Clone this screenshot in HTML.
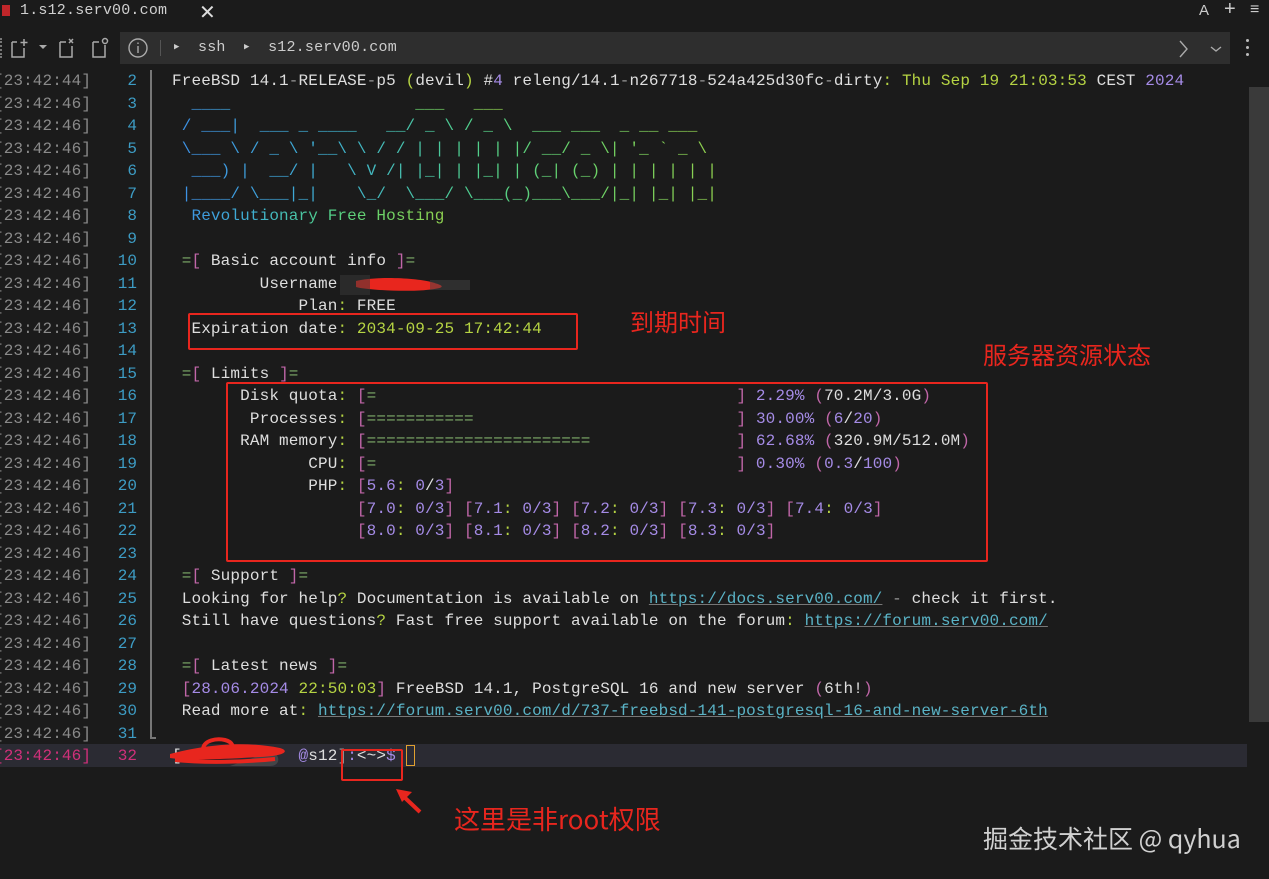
<!DOCTYPE html>
<html><head><meta charset="utf-8"><style>
body{margin:0;width:1269px;height:879px;background:#1b1b1b;overflow:hidden;position:relative;font-family:"Liberation Mono",monospace;}
.r{position:absolute;left:0;height:22.5px;line-height:22.5px;font-size:16px;white-space:pre;color:#dedede;width:1247px}
.ts{position:absolute;left:-6px;color:#8a8a8a;letter-spacing:0.1px}
.ln{position:absolute;right:1110px;color:#3d9cc4;text-align:right}
.tx{position:absolute;left:172px;letter-spacing:0.13px}
.p{color:#a58be6}.y{color:#b6d443}.b{color:#c066a8}.e{color:#7fae6a}.l{color:#5ab3c6;text-decoration:underline;text-decoration-color:#777}
.g{color:#9a9a9a}
.art{background:linear-gradient(90deg,#3d8fe6 0%,#3fb0d0 30%,#4fcf8f 55%,#69d36a 75%,#8fd04f 100%);-webkit-background-clip:text;background-clip:text;color:transparent}
.box{position:absolute;border:2.5px solid #e8261e;border-radius:2px}
.ann{position:absolute;color:#e8261e;font-family:"Noto Sans CJK SC",sans-serif;white-space:nowrap}
</style></head><body>
<div style="position:absolute;left:2px;top:5px;width:8px;height:11px;background:#c0262a"></div>
<div style="position:absolute;left:20px;top:2px;font-size:15px;color:#cfcfcf;letter-spacing:0.2px">1.s12.serv00.com</div>
<div style="position:absolute;left:199px;top:0px;font-family:'Liberation Sans',sans-serif;font-size:20px;color:#ddd">✕</div>
<div style="position:absolute;left:1199px;top:2px;font-family:'Liberation Sans',sans-serif;font-size:15px;color:#ccc">A</div>
<div style="position:absolute;left:1224px;top:-2px;font-family:'Liberation Sans',sans-serif;font-size:20px;color:#ccc">+</div>
<div style="position:absolute;left:1250px;top:1px;font-family:'Liberation Sans',sans-serif;font-size:16px;color:#ccc">≡</div>
<div style="position:absolute;left:0;top:38px;width:3px;height:20px;border-left:2px dotted #777"></div>
<svg style="position:absolute;left:8px;top:36px" width="110" height="26" viewBox="0 0 110 26" fill="none" stroke="#aaa" stroke-width="1.5">
<path d="M4 6h5M4 6v15h12v-9"/><path d="M16 3v7M12.5 6.5h7"/>
<path d="M31 9l4 4 4-4z" fill="#aaa" stroke="none"/>
<path d="M52 6h6M52 6v15h12v-11"/><path d="M61 3l4 4M65 3l-4 4"/>
<path d="M85 6h6M85 6v15h12v-12"/><circle cx="97" cy="5" r="2.5"/>
</svg>
<div style="position:absolute;left:120px;top:32px;width:1110px;height:32px;background:#2e2e2e"></div>
<svg style="position:absolute;left:127px;top:37px" width="24" height="24" fill="none" stroke="#aaa" stroke-width="1.4"><circle cx="11" cy="11" r="9"/><path d="M11 9v7M11 5.5v1.5"/></svg>
<div style="position:absolute;left:160px;top:40px;width:1px;height:16px;background:#555"></div>
<div style="position:absolute;left:174px;top:39px;font-size:15px;color:#ccc;white-space:pre;letter-spacing:0.2px"><span style="font-size:9px;position:relative;top:-2px">▶</span>  ssh  <span style="font-size:9px;position:relative;top:-2px">▶</span>  s12.serv00.com</div>
<svg style="position:absolute;left:1176px;top:38px" width="50" height="22" fill="none" stroke="#aaa" stroke-width="1.4"><path d="M4 3l7 8-7 8"/><path d="M35 9l5 4 5-4"/></svg>
<div style="position:absolute;left:1246px;top:39px;width:3px;height:3px;background:#bbb;border-radius:2px;box-shadow:0 7px #bbb,0 14px #bbb"></div>
<div style="position:absolute;left:1249px;top:87px;width:20px;height:635px;background:#3a3a3a"></div>
<div style="position:absolute;left:0;top:744px;width:1247px;height:23px;background:#2b2b33"></div>
<div style="position:absolute;left:150px;top:70px;width:1.5px;height:668px;background:#777"></div>
<div style="position:absolute;left:150px;top:737px;width:6px;height:1.5px;background:#777"></div>

<div class="r" style="top:70px"><span class="ts">[23:42:44]</span><span class="ln">2</span><span class="tx">FreeBSD 14.1<span class="g">-</span>RELEASE<span class="g">-</span>p5 <span class="y">(</span>devil<span class="y">)</span> #<span class="p">4</span> releng/14.1<span class="g">-</span>n267718<span class="g">-</span>524a425d30fc<span class="g">-</span>dirty<span class="y">:</span> <span class="y">Thu Sep 19 21:03:53</span> CEST <span class="p">2024</span></span></div>
<div class="r" style="top:92.5px"><span class="ts">[23:42:46]</span><span class="ln">3</span><span class="tx art">  ____                   ___   ___</span></div>
<div class="r" style="top:115px"><span class="ts">[23:42:46]</span><span class="ln">4</span><span class="tx art"> / ___|  ___ _ ____   __/ _ \ / _ \  ___ ___  _ __ ___</span></div>
<div class="r" style="top:137.5px"><span class="ts">[23:42:46]</span><span class="ln">5</span><span class="tx art"> \___ \ / _ \ '__\ \ / / | | | | | |/ __/ _ \| '_ ` _ \</span></div>
<div class="r" style="top:160px"><span class="ts">[23:42:46]</span><span class="ln">6</span><span class="tx art">  ___) |  __/ |   \ V /| |_| | |_| | (_| (_) | | | | | |</span></div>
<div class="r" style="top:182.5px"><span class="ts">[23:42:46]</span><span class="ln">7</span><span class="tx art"> |____/ \___|_|    \_/  \___/ \___(_)___\___/|_| |_| |_|</span></div>
<div class="r" style="top:205px"><span class="ts">[23:42:46]</span><span class="ln">8</span><span class="tx art">  Revolutionary Free Hosting</span></div>
<div class="r" style="top:227.5px"><span class="ts">[23:42:46]</span><span class="ln">9</span></div>
<div class="r" style="top:250px"><span class="ts">[23:42:46]</span><span class="ln">10</span><span class="tx"> <span class="e">=</span><span class="b">[</span> Basic account info <span class="b">]</span><span class="e">=</span></span></div>
<div class="r" style="top:272.5px"><span class="ts">[23:42:46]</span><span class="ln">11</span><span class="tx">         Username</span></div>
<div class="r" style="top:295px"><span class="ts">[23:42:46]</span><span class="ln">12</span><span class="tx">             Plan<span class="y">:</span> FREE</span></div>
<div class="r" style="top:317.5px"><span class="ts">[23:42:46]</span><span class="ln">13</span><span class="tx">  Expiration date<span class="y">:</span> <span class="y">2034-09-25 17:42:44</span></span></div>
<div class="r" style="top:340px"><span class="ts">[23:42:46]</span><span class="ln">14</span></div>
<div class="r" style="top:362.5px"><span class="ts">[23:42:46]</span><span class="ln">15</span><span class="tx"> <span class="e">=</span><span class="b">[</span> Limits <span class="b">]</span><span class="e">=</span></span></div>
<div class="r" style="top:385px"><span class="ts">[23:42:46]</span><span class="ln">16</span><span class="tx">       Disk quota<span class="y">:</span> <span class="b">[</span><span class="e">=</span>                                     <span class="b">]</span> <span class="p">2.29%</span> <span class="b">(</span>70.2M/3.0G<span class="b">)</span></span></div>
<div class="r" style="top:407.5px"><span class="ts">[23:42:46]</span><span class="ln">17</span><span class="tx">        Processes<span class="y">:</span> <span class="b">[</span><span class="e">===========</span>                           <span class="b">]</span> <span class="p">30.00%</span> <span class="b">(</span><span class="p">6</span>/<span class="p">20</span><span class="b">)</span></span></div>
<div class="r" style="top:430px"><span class="ts">[23:42:46]</span><span class="ln">18</span><span class="tx">       RAM memory<span class="y">:</span> <span class="b">[</span><span class="e">=======================</span>               <span class="b">]</span> <span class="p">62.68%</span> <span class="b">(</span>320.9M/512.0M<span class="b">)</span></span></div>
<div class="r" style="top:452.5px"><span class="ts">[23:42:46]</span><span class="ln">19</span><span class="tx">              CPU<span class="y">:</span> <span class="b">[</span><span class="e">=</span>                                     <span class="b">]</span> <span class="p">0.30%</span> <span class="b">(</span><span class="p">0.3</span>/<span class="p">100</span><span class="b">)</span></span></div>
<div class="r" style="top:475px"><span class="ts">[23:42:46]</span><span class="ln">20</span><span class="tx">              PHP<span class="y">:</span> <span class="b">[</span><span class="p">5.6</span><span class="y">:</span> <span class="p">0</span>/<span class="p">3</span><span class="b">]</span></span></div>
<div class="r" style="top:497.5px"><span class="ts">[23:42:46]</span><span class="ln">21</span><span class="tx p">                   <span class="b">[</span>7.0<span class="y">:</span> 0/3<span class="b">]</span> <span class="b">[</span>7.1<span class="y">:</span> 0/3<span class="b">]</span> <span class="b">[</span>7.2<span class="y">:</span> 0/3<span class="b">]</span> <span class="b">[</span>7.3<span class="y">:</span> 0/3<span class="b">]</span> <span class="b">[</span>7.4<span class="y">:</span> 0/3<span class="b">]</span></span></div>
<div class="r" style="top:520px"><span class="ts">[23:42:46]</span><span class="ln">22</span><span class="tx p">                   <span class="b">[</span>8.0<span class="y">:</span> 0/3<span class="b">]</span> <span class="b">[</span>8.1<span class="y">:</span> 0/3<span class="b">]</span> <span class="b">[</span>8.2<span class="y">:</span> 0/3<span class="b">]</span> <span class="b">[</span>8.3<span class="y">:</span> 0/3<span class="b">]</span></span></div>
<div class="r" style="top:542.5px"><span class="ts">[23:42:46]</span><span class="ln">23</span></div>
<div class="r" style="top:565px"><span class="ts">[23:42:46]</span><span class="ln">24</span><span class="tx"> <span class="e">=</span><span class="b">[</span> Support <span class="b">]</span><span class="e">=</span></span></div>
<div class="r" style="top:587.5px"><span class="ts">[23:42:46]</span><span class="ln">25</span><span class="tx"> Looking for help<span class="y">?</span> Documentation is available on <span class="l">https://docs.serv00.com/</span> <span class="g">-</span> check it first.</span></div>
<div class="r" style="top:610px"><span class="ts">[23:42:46]</span><span class="ln">26</span><span class="tx"> Still have questions<span class="y">?</span> Fast free support available on the forum<span class="y">:</span> <span class="l">https://forum.serv00.com/</span></span></div>
<div class="r" style="top:632.5px"><span class="ts">[23:42:46]</span><span class="ln">27</span></div>
<div class="r" style="top:655px"><span class="ts">[23:42:46]</span><span class="ln">28</span><span class="tx"> <span class="e">=</span><span class="b">[</span> Latest news <span class="b">]</span><span class="e">=</span></span></div>
<div class="r" style="top:677.5px"><span class="ts">[23:42:46]</span><span class="ln">29</span><span class="tx"> <span class="b">[</span><span class="p">28.06.2024</span> <span class="y">22:50:03</span><span class="b">]</span> FreeBSD 14.1, PostgreSQL 16 and new server <span class="b">(</span>6th!<span class="b">)</span></span></div>
<div class="r" style="top:700px"><span class="ts">[23:42:46]</span><span class="ln">30</span><span class="tx"> Read more at<span class="y">:</span> <span class="l">https://forum.serv00.com/d/737-freebsd-141-postgresql-16-and-new-server-6th</span></span></div>
<div class="r" style="top:722.5px"><span class="ts">[23:42:46]</span><span class="ln">31</span></div>
<div class="r" style="top:745px"><span class="ts" style="color:#d0307a">[23:42:46]</span><span class="ln" style="color:#d0307a">32</span><span class="tx">[            <span class="p">@</span>s12<span class="g">]</span><span class="p">:</span>&lt;~&gt;<span class="p">$</span> <span style="display:inline-block;width:7px;height:19px;border:1.5px solid #e0a030;vertical-align:middle"></span></span></div>

<svg style="position:absolute;left:160px;top:270px" width="330" height="30"><path d="M196 11c20-5 60-3 75 1s15 6-5 8c-20 2-60 0-70-3z" fill="#e8261e"/><path d="M180 5h30v20h-30z" fill="#3a3a3a" opacity=".5"/><path d="M270 10h40v10h-40z" fill="#444" opacity=".5"/></svg>
<svg style="position:absolute;left:165px;top:734px" width="150" height="35"><path d="M105 18c10 0 12 14 0 14h-40z" fill="#555" opacity=".6"/><path d="M5 20c30-8 70-14 110-6 10 3 5 8-20 9-35 2-70 4-90 1z" fill="#e8261e"/><path d="M38 16c0-10 14-12 22-10s10 8 6 12" fill="none" stroke="#e8261e" stroke-width="4"/><path d="M10 26c30 3 70 2 100-1" stroke="#e8261e" stroke-width="4"/></svg>

<div class="box" style="left:188px;top:313px;width:386px;height:33px"></div>
<div class="box" style="left:226px;top:382px;width:758px;height:176px"></div>
<div class="box" style="left:341px;top:749px;width:58px;height:28px"></div>
<svg style="position:absolute;left:392px;top:785px" width="40" height="35"><path d="M28 27L10 10" stroke="#e8261e" stroke-width="4"/><path d="M4 4l16 3-10 10z" fill="#e8261e"/></svg>
<div class="ann" style="left:630px;top:303px;font-size:24px">到期时间</div>
<div class="ann" style="left:983px;top:336px;font-size:24px">服务器资源状态</div>
<div class="ann" style="left:454px;top:800px;font-size:26px">这里是非root权限</div>
<div style="position:absolute;left:983px;top:820px;font-family:'Noto Sans CJK SC',sans-serif;font-size:25px;color:#d0d0d0;white-space:nowrap">掘金技术社区 @ qyhua</div>
</body></html>
